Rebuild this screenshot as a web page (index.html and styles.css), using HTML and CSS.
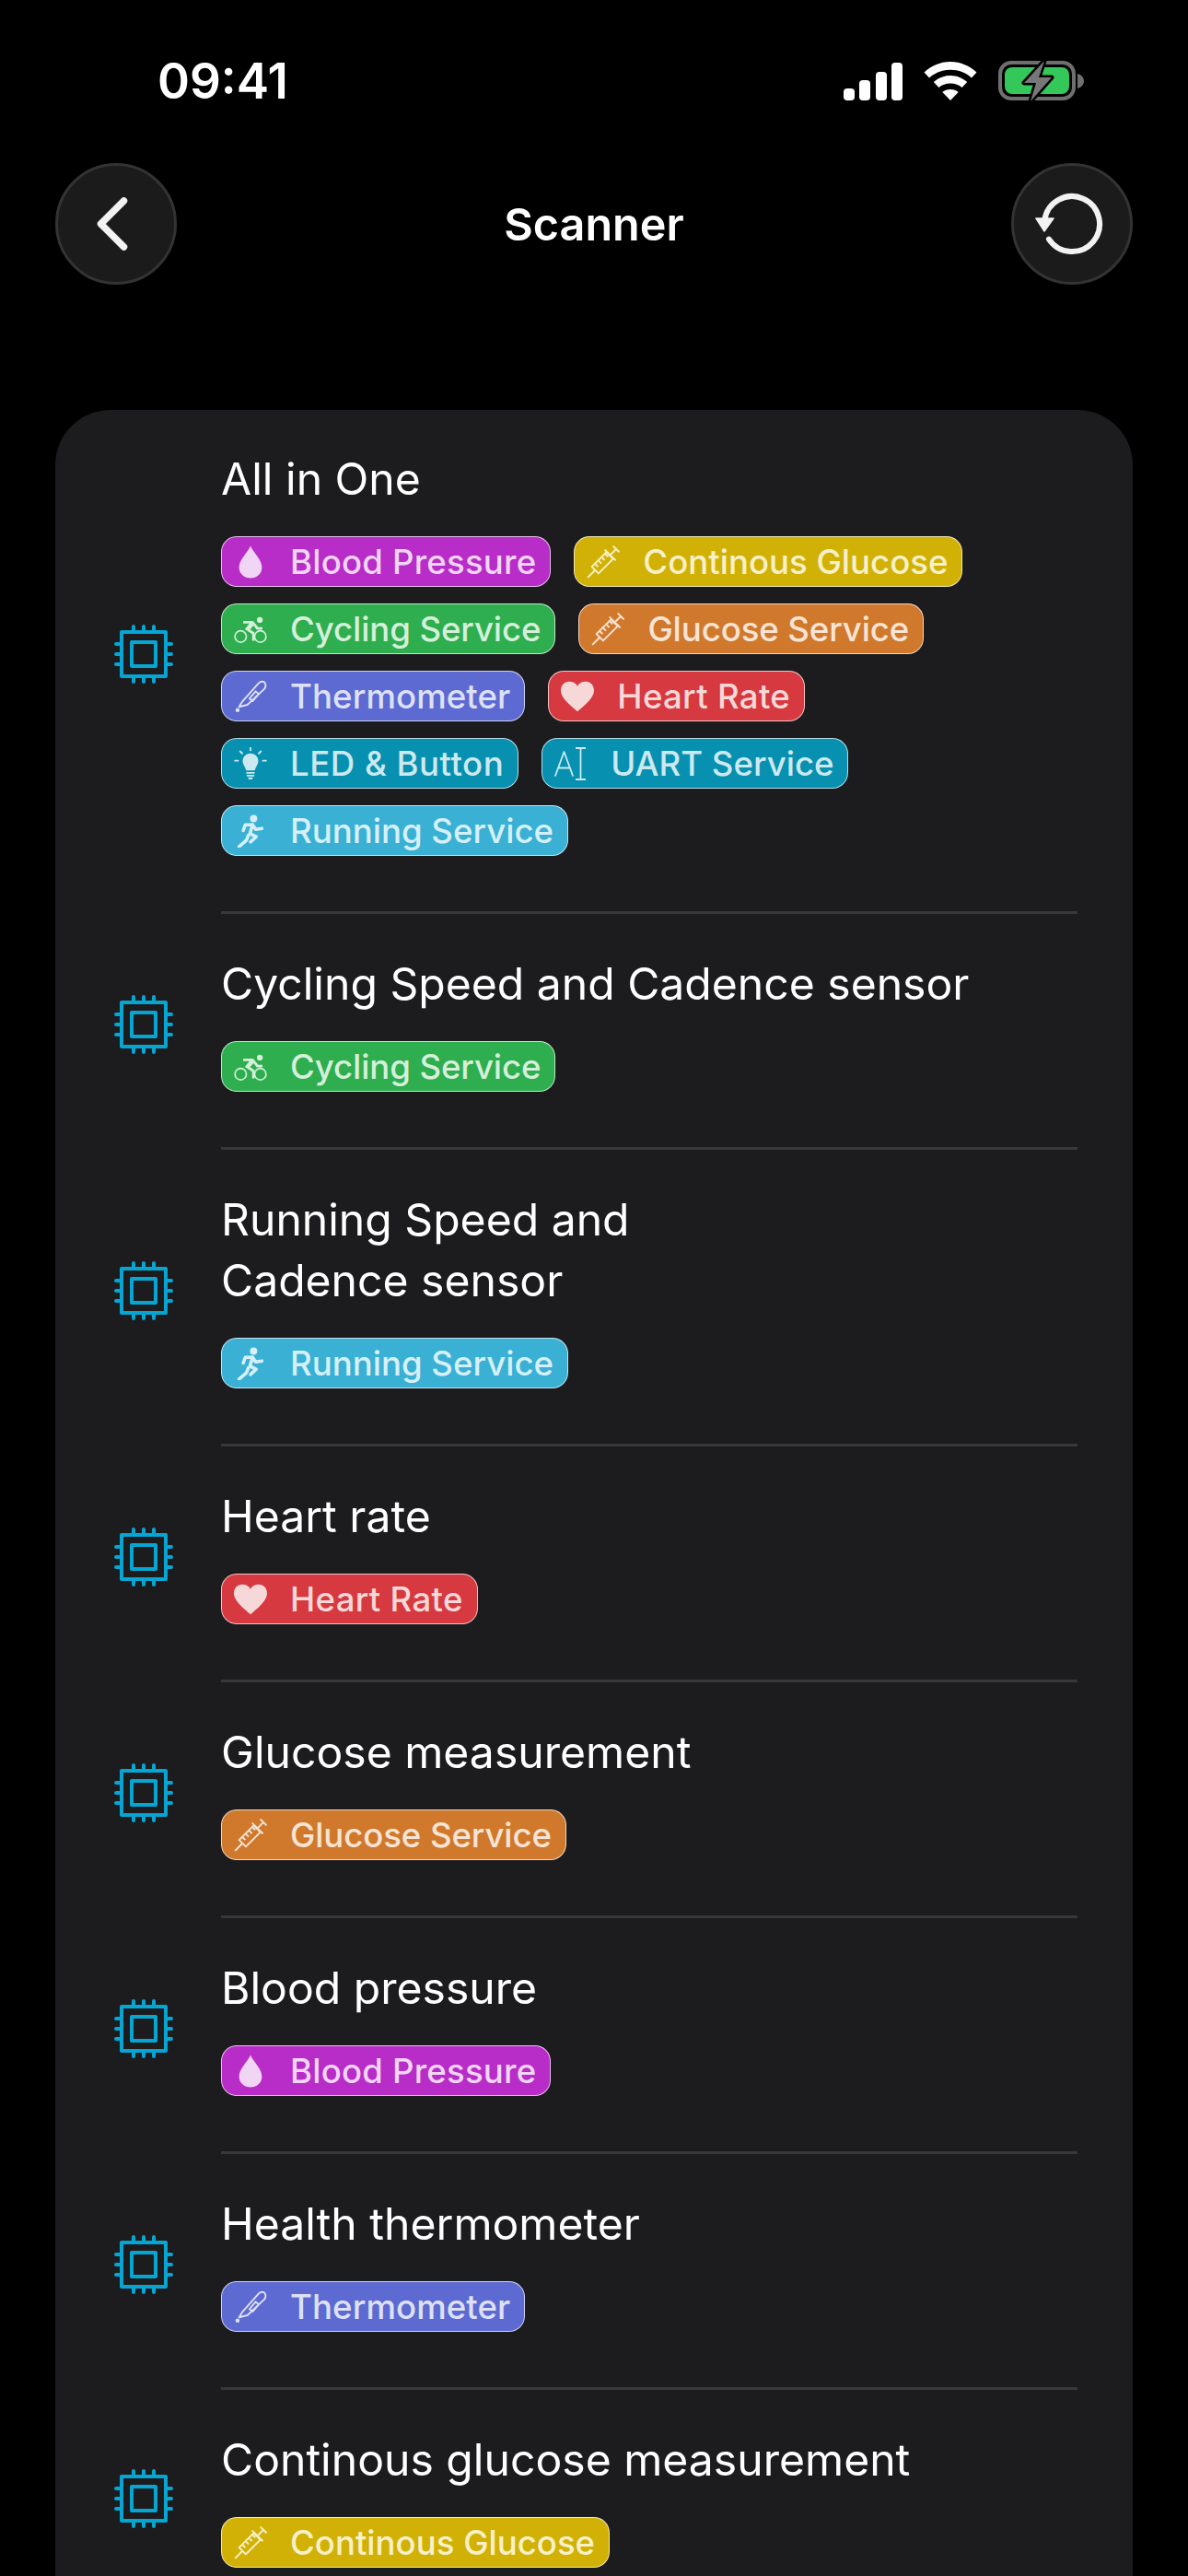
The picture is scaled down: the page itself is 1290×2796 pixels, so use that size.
FILE: index.html
```html
<!DOCTYPE html>
<html lang="en">
<head>
<meta charset="utf-8">
<title>Scanner</title>
<link rel="stylesheet" href="styles.css">
</head>
<body>
<svg class="defs" width="0" height="0" aria-hidden="true">
  <defs>
    <symbol id="chip" viewBox="0 0 64 64">
      <g fill="none" stroke="#06a5d2" stroke-width="4" stroke-linecap="round" stroke-linejoin="round">
        <rect x="8" y="8" width="48" height="48"/>
        <rect x="19" y="19" width="26" height="26"/>
        <path d="M21 2v6M32 2v6M43 2v6M21 56v6M32 56v6M43 56v6M2 21h6M2 32h6M2 43h6M56 21h6M56 32h6M56 43h6"/>
      </g>
    </symbol>
    <symbol id="drop" viewBox="0 0 32 32"><path fill="currentColor" d="M16 .5c3 7 11 13 11 21a11 10 0 0 1-22 0C5 13.500 13 7.500 16 .5z"/></symbol>
    <symbol id="syringe" viewBox="0 0 32 32">
      <g fill="none" stroke="currentColor" stroke-width="1.700" stroke-linecap="round" stroke-linejoin="round">
        <path d="M1.500 30.500l6.500-6.500M5 20.500l6.500 6.500 14-14-6.500-6.500zM18 4.500l9.500 9.500M24 8l4.500-4.500M26 1l5 5"/>
        <path stroke-linecap="butt" d="M8.200 17.800l2.800 2.800M11.400 14.600l2.800 2.800M14.600 11.400l2.800 2.800M17.800 8.200l2.800 2.800"/>
      </g>
    </symbol>
    <symbol id="bike" viewBox="0 0 32 32">
      <g fill="none" stroke="currentColor" stroke-width="1.500">
        <circle cx="6.500" cy="23" r="5.500"/>
        <circle cx="25.500" cy="23" r="5.500"/>
      </g>
      <circle cx="25" cy="7" r="2.800" fill="currentColor"/>
      <path fill="currentColor" d="M9 8h9.500l5 6h4v2.400h-5.500L19 12.500l-3.500 3.700 4.500 3V27h-2.400v-6.300L10.500 16 15 10.500H9z"/>
    </symbol>
    <symbol id="thermo" viewBox="0 0 32 32">
      <g fill="none" stroke="currentColor" stroke-width="1.700" stroke-linecap="round" stroke-linejoin="round">
        <path d="M5 26l3-5L24 3c2-2 5-2 6 0s1 4-1 6L13 24z"/>
        <path d="M15 18l6-7 3 2.500-6 7z"/>
      </g>
      <circle cx="3.500" cy="29" r="2" fill="currentColor"/>
    </symbol>
    <symbol id="heart" viewBox="0 0 32 32"><path fill="currentColor" d="M16 30.500C10 25 0 18 0 10 0 5 3.500 1.500 8 1.500c3.500 0 6.500 1.500 8 4.500 1.500-3 4.500-4.500 8-4.500 4.500 0 8 3.500 8 8.500 0 8-10 15-16 20.500z"/></symbol>
    <symbol id="bulb" viewBox="0 0 32 32">
      <path fill="currentColor" d="M16 6c-4.500 0-7.500 3.300-7.500 7.300 0 3.500 2.500 5.200 3.300 9.200h8.400c.8-4 3.300-5.700 3.300-9.200C23.500 9.300 20.500 6 16 6zM12 24h8v1.600h-8zM12.300 26.600h7.400v1.600h-7.400zM13.500 29.200h5L17.500 31h-3z"/>
      <path fill="none" stroke="currentColor" stroke-width="1.600" stroke-linecap="round" d="M16 0.500v2.500M6 4l2 2M26 4l-2 2M1 13h3M28 13h3"/>
    </symbol>
    <symbol id="cursor" viewBox="0 0 36 36">
      <g fill="none" stroke="currentColor" stroke-width="1.800" stroke-linecap="round" stroke-linejoin="round">
        <path d="M1 31L10.500 5 20 31M4.500 22.500h12"/>
        <path stroke-linecap="butt" d="M23 1h11M23 35h11M28.500 1v34"/>
      </g>
    </symbol>
    <symbol id="run" viewBox="0 0 32 32">
      <circle cx="19" cy="4" r="3.500" fill="currentColor"/>
      <g fill="none" stroke="currentColor" stroke-width="3.200" stroke-linecap="round" stroke-linejoin="round">
        <path d="M9 15.500l2-5.500h7l-2.500 8.500 6 3-5.500 5"/>
        <path d="M18 10l3 4.500 6-1"/>
        <path d="M14 20l-2 5-7 6"/>
      </g>
    </symbol>
  </defs>
</svg>

<div class="phone">
  <header class="status">
    <span class="time">09:41</span>
    <div class="status-icons">
      <svg class="signal" width="64" height="41" viewBox="0 0 64 41">
        <rect x="0" y="28" width="12" height="13" rx="4"/>
        <rect x="17" y="19" width="12" height="22" rx="4"/>
        <rect x="35" y="10" width="12" height="31" rx="4"/>
        <rect x="52" y="0" width="12" height="41" rx="4"/>
      </svg>
      <svg class="wifi" width="58" height="42" viewBox="0 0 58 42">
        <path d="M29 0c11 0 21 4.500 28.500 11.500l-5.500 6C46 12 38 8.800 29 8.800S12 12 6 17.500L.5 11.500C8 4.500 18 0 29 0z"/>
        <path d="M29 15c7 0 13.500 2.800 18.200 7l-5.600 6C38.200 25.100 34 23.500 29 23.500s-9.200 1.600-12.600 4.500l-5.600-6c4.700-4.200 11.200-7 18.200-7z"/>
        <path d="M29 30c3.500 0 6.500 1.200 8.700 3L29 42l-8.700-9c2.200-1.800 5.200-3 8.700-3z"/>
      </svg>
      <svg class="battery" width="93" height="46" viewBox="0 0 93 46">
        <rect x="2" y="3" width="80" height="39" rx="12" fill="none" stroke="#6f6f6f" stroke-width="4"/>
        <path d="M86 15c4 1 7 4 7 8s-3 7-7 8z" fill="#6f6f6f"/>
        <rect x="7" y="8" width="70" height="29" rx="8" fill="#34c759"/>
        <path d="M50 1L28 25h13l-6 20 23-26H44z" fill="#777" stroke="#000" stroke-width="5" stroke-linejoin="round" paint-order="stroke"/>
      </svg>
    </div>
  </header>

  <nav class="nav">
    <button class="round" type="button" aria-label="Back">
      <svg class="back-ico" width="34" height="58" viewBox="0 0 34 58"><path d="M29.500 4L4.500 29l25 25" fill="none" stroke="#f2f2f2" stroke-width="7.500" stroke-linecap="round" stroke-linejoin="round"/></svg>
    </button>
    <h1 class="title">Scanner</h1>
    <button class="round" type="button" aria-label="Refresh">
      <svg width="80" height="80" viewBox="0 0 80 80">
        <path d="M10.300 36A30 30 0 1 1 15 56.600" fill="none" stroke="#f2f2f2" stroke-width="6" stroke-linecap="round"/>
        <path d="M1 34h19L10 48z" fill="#f2f2f2" stroke="#f2f2f2" stroke-width="1.500" stroke-linejoin="round"/>
      </svg>
    </button>
  </nav>

  <main class="card">
    <section class="row row-all">
      <svg class="chip"><use href="#chip"/></svg>
      <div class="body">
        <h2 class="name">All in One</h2>
        <div class="tags">
          <span class="tag magenta"><svg class="ico"><use href="#drop"/></svg>Blood Pressure</span>
          <span class="tag gold"><svg class="ico"><use href="#syringe"/></svg>Continous Glucose</span>
          <span class="tag green"><svg class="ico"><use href="#bike"/></svg>Cycling Service</span>
          <span class="tag orange"><svg class="ico"><use href="#syringe"/></svg>Glucose Service</span>
          <span class="tag indigo"><svg class="ico"><use href="#thermo"/></svg>Thermometer</span>
          <span class="tag red"><svg class="ico"><use href="#heart"/></svg>Heart Rate</span>
          <span class="tag teal led"><svg class="ico"><use href="#bulb"/></svg>LED &amp; Button</span>
          <span class="tag teal"><svg class="ico"><use href="#cursor"/></svg>UART Service</span>
          <span class="tag sky"><svg class="ico"><use href="#run"/></svg>Running Service</span>
        </div>
      </div>
    </section>

    <section class="row">
      <svg class="chip"><use href="#chip"/></svg>
      <div class="body">
        <h2 class="name">Cycling Speed and Cadence sensor</h2>
        <div class="tags"><span class="tag green"><svg class="ico"><use href="#bike"/></svg>Cycling Service</span></div>
      </div>
    </section>

    <section class="row">
      <svg class="chip"><use href="#chip"/></svg>
      <div class="body">
        <h2 class="name">Running Speed and<br>Cadence sensor</h2>
        <div class="tags"><span class="tag sky"><svg class="ico"><use href="#run"/></svg>Running Service</span></div>
      </div>
    </section>

    <section class="row">
      <svg class="chip"><use href="#chip"/></svg>
      <div class="body">
        <h2 class="name">Heart rate</h2>
        <div class="tags"><span class="tag red"><svg class="ico"><use href="#heart"/></svg>Heart Rate</span></div>
      </div>
    </section>

    <section class="row">
      <svg class="chip"><use href="#chip"/></svg>
      <div class="body">
        <h2 class="name">Glucose measurement</h2>
        <div class="tags"><span class="tag orange"><svg class="ico"><use href="#syringe"/></svg>Glucose Service</span></div>
      </div>
    </section>

    <section class="row">
      <svg class="chip"><use href="#chip"/></svg>
      <div class="body">
        <h2 class="name">Blood pressure</h2>
        <div class="tags"><span class="tag magenta"><svg class="ico"><use href="#drop"/></svg>Blood Pressure</span></div>
      </div>
    </section>

    <section class="row">
      <svg class="chip"><use href="#chip"/></svg>
      <div class="body">
        <h2 class="name">Health thermometer</h2>
        <div class="tags"><span class="tag indigo"><svg class="ico"><use href="#thermo"/></svg>Thermometer</span></div>
      </div>
    </section>

    <section class="row">
      <svg class="chip"><use href="#chip"/></svg>
      <div class="body">
        <h2 class="name">Continous glucose measurement</h2>
        <div class="tags"><span class="tag gold"><svg class="ico"><use href="#syringe"/></svg>Continous Glucose</span></div>
      </div>
    </section>
  </main>
</div>
</body>
</html>
```
FILE: styles.css
```css
* { box-sizing: border-box; }
html, body { margin: 0; padding: 0; background: #000; }
body { width: 1290px; height: 2796px; overflow: hidden; font-family: Inter, "Liberation Sans", sans-serif; color: #fff; }
.defs { position: absolute; }
.phone { display: flex; flex-direction: column; height: 2796px; overflow: hidden; }
.status { display: flex; align-items: center; justify-content: space-between; height: 60px; margin-top: 58px; padding: 0 113px 0 171px; }
.time { font-size: 53px; font-weight: 600; line-height: 60px; }
.status-icons { display: flex; align-items: center; gap: 23px; }
.signal, .wifi { fill: #fff; }
.nav { display: flex; align-items: center; justify-content: space-between; flex: none; height: 132px; margin: 59px 60px 0; }
.round { display: flex; align-items: center; justify-content: center; width: 132px; height: 132px; padding: 0; border: 3px solid #333335; border-radius: 50%; background: #1b1b1c; }
.back-ico { margin-right: 9px; }
.title { margin: 0; padding-top: 2px; font-size: 48.500px; font-weight: 600; line-height: 56px; }
.card { flex: 1; margin: 136px 60px 0; padding: 0 60px 0 0; background: #1c1c1e; border-radius: 60px 60px 0 0; }
.row { display: flex; align-items: center; }
.chip { flex: none; width: 64px; height: 64px; margin: 0 52px 17px 64px; }
.body { flex: 1; display: flex; flex-direction: column; gap: 29px; padding: 43px 0 60px; border-bottom: 3px solid #38383a; }
.row-all .body { padding: 42px 0 60px; }
.row:last-child .body { border-bottom: 0; }
.name { margin: 0; font-size: 48.100px; font-weight: 400; line-height: 66px; }
.tags { display: flex; flex-wrap: wrap; gap: 18px 25px; }
.tag { display: inline-flex; align-items: center; height: 55px; padding: 0 15px 0 13px; border: 1.500px solid rgba(255, 255, 255, 0.7); border-radius: 17px; font-size: 36.600px; font-weight: 500; line-height: 50px; white-space: nowrap; }
.ico { flex: none; width: 36px; height: 36px; margin-right: 25px; }
.magenta { background: #b82cc8; color: #f0d5f4; letter-spacing: 0.2px; }
.gold { background: #d1b106; color: #f8f0c8; }
.green { background: #2eae4e; color: #d5efdb; letter-spacing: -0.1px; }
.orange { background: #d0792c; color: #f7e4d5; letter-spacing: -0.1px; }
.indigo { background: #5c6ad2; color: #dee1f6; letter-spacing: 0.1px; }
.red { background: #d6393f; color: #f7d8d9; letter-spacing: 0.3px; }
.teal { background: #0790b0; color: #cde9f0; }
.led { letter-spacing: 0.5px; }
.sky { background: #39b0d4; color: #d5f0f8; }
```
